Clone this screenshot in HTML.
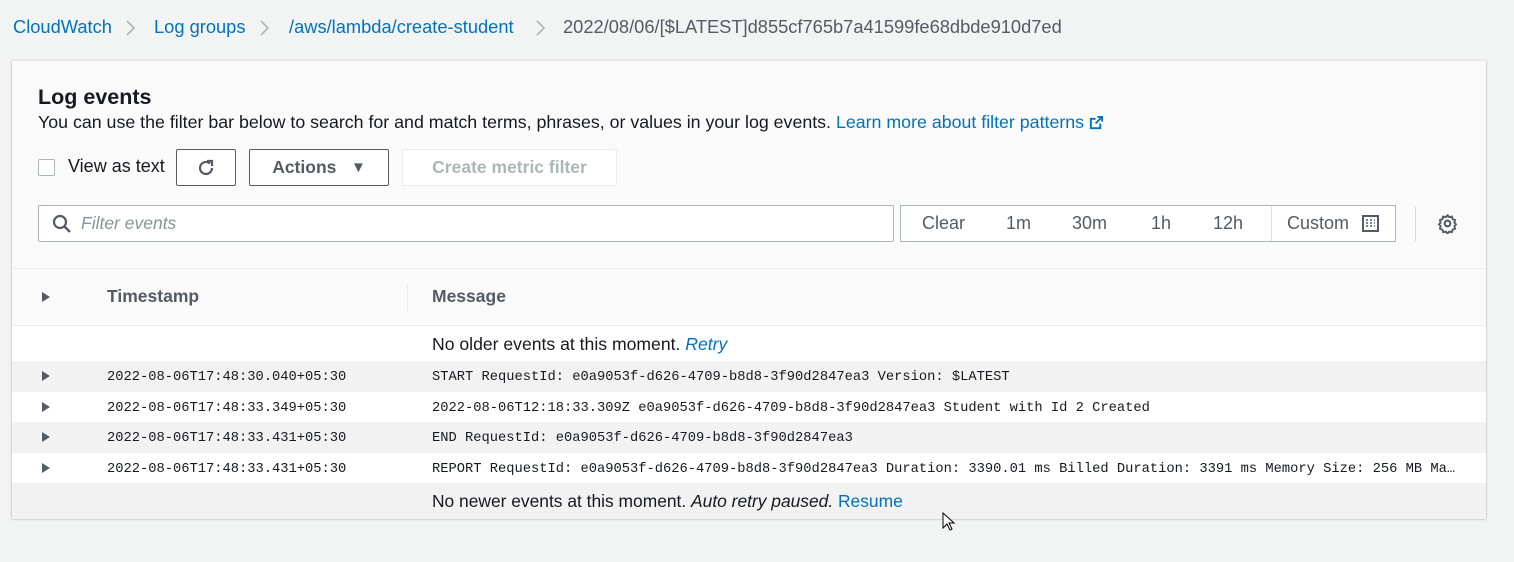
<!DOCTYPE html>
<html><head><style>
*{box-sizing:border-box;margin:0;padding:0}
body{width:1514px;height:562px;background:#f2f3f3;font-family:"Liberation Sans",sans-serif;color:#16191f;position:relative;overflow:hidden;font-size:17px}
.a{position:absolute;white-space:nowrap}
.link{color:#0073bb}
.bc{font-size:18.3px;top:16px}
.panel{position:absolute;left:12px;top:60px;width:1474px;height:458px;background:#fafafa;box-shadow:0 1px 2px rgba(0,0,0,.35);border-top:1px solid #e6e6e6}
.btn{position:absolute;border:1px solid #545b64;background:#fff;height:37px;border-radius:2px;font-weight:bold;color:#545b64;display:flex;align-items:center;justify-content:center;font-size:17.5px}
.mono{font-family:"Liberation Mono",monospace;font-size:13.75px;color:#16191f}
.row{position:absolute;left:0;width:1474px}
.tri{position:absolute;left:30px;width:0;height:0;border-left:8px solid #545b64;border-top:5px solid transparent;border-bottom:5px solid transparent}
.chev{position:absolute;top:20px}
</style></head><body>
<div class="a bc link" style="left:13px">CloudWatch</div>
<svg class="chev" style="left:125px" width="10" height="16" viewBox="0 0 10 16"><path d="M2 1l7 7-7 7" fill="none" stroke="#aab7b8" stroke-width="1.6"/></svg>
<div class="a bc link" style="left:154px">Log groups</div>
<svg class="chev" style="left:259px" width="10" height="16" viewBox="0 0 10 16"><path d="M2 1l7 7-7 7" fill="none" stroke="#aab7b8" stroke-width="1.6"/></svg>
<div class="a bc link" style="left:289px">/aws/lambda/create-student</div>
<svg class="chev" style="left:535px" width="10" height="16" viewBox="0 0 10 16"><path d="M2 1l7 7-7 7" fill="none" stroke="#aab7b8" stroke-width="1.6"/></svg>
<div class="a bc" style="left:563px;color:#545b64">2022/08/06/[$LATEST]d855cf765b7a41599fe68dbde910d7ed</div>

<div class="panel">
<div class="a" style="left:26px;top:24px;font-size:21.5px;font-weight:bold">Log events</div>
<div class="a" style="left:26px;top:51px;font-size:17.8px">You can use the filter bar below to search for and match terms, phrases, or values in your log events. <span class="link">Learn more about filter patterns</span> <svg width="15" height="15" viewBox="0 0 16 16" style="vertical-align:-2px"><path d="M9 2h5v5M14 2L7 9M12 9v5H2V4h5" fill="none" stroke="#0073bb" stroke-width="2"/></svg></div>
<div class="a" style="left:26px;top:98px;width:17px;height:17px;border:1px solid #aab7b8;background:#fff;border-radius:2px"></div>
<div class="a" style="left:56px;top:95px;font-size:18px">View as text</div>
<div class="btn" style="left:164px;top:88px;width:60px"><svg width="22" height="22" viewBox="0 0 22 22"><path d="M17 11a6 6 0 1 1-2-4.5" fill="none" stroke="#545b64" stroke-width="2.2"/><path d="M12 4h5v5" fill="none" stroke="#545b64" stroke-width="2.2"/></svg></div>
<div class="btn" style="left:237px;top:88px;width:140px">Actions&nbsp;&nbsp;&nbsp;<span style="font-size:15px">▼</span></div>
<div class="btn" style="left:390px;top:88px;width:215px;border-color:#e9ebed;color:#aab7b8">Create metric filter</div>

<div class="a" style="left:26px;top:144px;width:856px;height:37px;border:1px solid #aab7b8;background:#fff;border-radius:2px"></div>
<svg class="a" style="left:40px;top:153px" width="20" height="20" viewBox="0 0 20 20"><circle cx="8" cy="8" r="6" fill="none" stroke="#545b64" stroke-width="2.2"/><path d="M12.5 12.5L18 18" stroke="#545b64" stroke-width="2.4"/></svg>
<div class="a" style="left:69px;top:152px;font-style:italic;color:#879596;font-size:17.5px">Filter events</div>
<div class="a" style="left:888px;top:144px;width:496px;height:37px;border:1px solid #aab7b8;background:#fff"></div>
<div class="a" style="left:1259px;top:145px;width:1px;height:35px;background:#e0e0e0"></div>
<div class="a" style="left:910px;top:152px;color:#545b64;font-size:18px">Clear</div>
<div class="a" style="left:994px;top:152px;color:#545b64;font-size:18px">1m</div>
<div class="a" style="left:1060px;top:152px;color:#545b64;font-size:18px">30m</div>
<div class="a" style="left:1139px;top:152px;color:#545b64;font-size:18px">1h</div>
<div class="a" style="left:1201px;top:152px;color:#545b64;font-size:18px">12h</div>
<div class="a" style="left:1275px;top:152px;color:#545b64;font-size:18px">Custom</div>
<svg class="a" style="left:1350px;top:154px" width="17" height="17" viewBox="0 0 17 17"><rect x="1" y="1" width="15" height="15" fill="none" stroke="#545b64" stroke-width="2"/><path d="M4 5h2M8 5h2M12 5h1M4 8h2M8 8h2M12 8h1M4 11h2M8 11h2M12 11h1" stroke="#545b64" stroke-width="1.6"/></svg>
<div class="a" style="left:1403px;top:146px;width:1px;height:34px;background:#d5dbdb"></div>
<svg class="a" style="left:1425px;top:152px" width="21" height="21" viewBox="0 0 24 24"><circle cx="12" cy="12" r="3.2" fill="none" stroke="#545b64" stroke-width="2.4"/><path d="M12 2.5l2 2.3 3-.8.8 3 2.9 1-.9 3 2 2-2 2 .9 3-2.9 1-.8 3-3-.8-2 2.3-2-2.3-3 .8-.8-3-2.9-1 .9-3-2-2 2-2-.9-3 2.9-1 .8-3 3 .8z" fill="none" stroke="#545b64" stroke-width="2.2" stroke-linejoin="round"/></svg>

<div class="row" style="top:207px;height:1px;background:#eaeded"></div>
<div class="row" style="top:264px;height:1px;background:#eaeded"></div>
<div class="tri" style="top:231px"></div>
<div class="a" style="left:395px;top:222px;width:1px;height:30px;background:#eaeded"></div>
<div class="a" style="left:95px;top:225px;font-weight:bold;color:#545b64;font-size:17.5px">Timestamp</div>
<div class="a" style="left:420px;top:225px;font-weight:bold;color:#545b64;font-size:17.5px">Message</div>

<div class="row" style="top:265px;height:35px;background:#fff"></div>
<div class="a" style="left:420px;top:273px;font-size:17.6px">No older events at this moment. <i class="link">Retry</i></div>

<div class="row" style="top:300px;height:31px;background:#f2f2f2"><div class="tri" style="top:10px"></div><div class="a mono" style="left:95px;top:9px">2022-08-06T17:48:30.040+05:30</div><div class="a mono" style="left:420px;top:9px">START RequestId: e0a9053f-d626-4709-b8d8-3f90d2847ea3 Version: $LATEST</div></div>
<div class="row" style="top:331px;height:30px;background:#fff"><div class="tri" style="top:10px"></div><div class="a mono" style="left:95px;top:9px">2022-08-06T17:48:33.349+05:30</div><div class="a mono" style="left:420px;top:9px">2022-08-06T12:18:33.309Z e0a9053f-d626-4709-b8d8-3f90d2847ea3 Student with Id 2 Created</div></div>
<div class="row" style="top:361px;height:31px;background:#f2f2f2"><div class="tri" style="top:10px"></div><div class="a mono" style="left:95px;top:9px">2022-08-06T17:48:33.431+05:30</div><div class="a mono" style="left:420px;top:9px">END RequestId: e0a9053f-d626-4709-b8d8-3f90d2847ea3</div></div>
<div class="row" style="top:392px;height:30px;background:#fff"><div class="tri" style="top:10px"></div><div class="a mono" style="left:95px;top:9px">2022-08-06T17:48:33.431+05:30</div><div class="a mono" style="left:420px;top:9px">REPORT RequestId: e0a9053f-d626-4709-b8d8-3f90d2847ea3 Duration: 3390.01 ms Billed Duration: 3391 ms Memory Size: 256 MB Ma…</div></div>
<div class="row" style="top:422px;height:36px;background:#f2f2f2"></div>
<div class="a" style="left:420px;top:430px;font-size:17.4px">No newer events at this moment. <i>Auto retry paused.</i> <span class="link">Resume</span></div>
</div>
<svg class="a" style="left:942px;top:512px" width="14" height="20" viewBox="0 0 14 20"><path d="M1 1v15l4-4 3 6 2-1-3-6h5z" fill="#fff" stroke="#000" stroke-width="1"/></svg>
</body></html>
